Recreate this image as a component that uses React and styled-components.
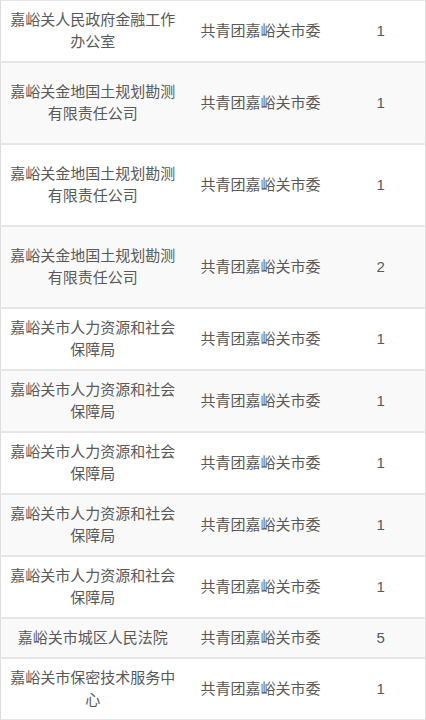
import React from 'react';
import styled, { createGlobalStyle } from 'styled-components';

const GlobalStyle = createGlobalStyle`
  body {
    margin: 0;
    background: #ffffff;
    font-family: "Liberation Sans", "Noto Sans CJK SC", sans-serif;
  }
`;

const Table = styled.table`
  width: 426px;
  border-collapse: collapse;
  table-layout: fixed;
  border-top: 1px solid #e6e6e6;
  border-left: 1px solid #dddddd;
  border-right: 1px solid #dddddd;
  color: #595959;
  font-size: 15px;
  line-height: 22px;
`;

const Row = styled.tr`
  background: ${({ striped }) => (striped ? '#f9f9f9' : '#ffffff')};
  border-bottom: 2px solid #e6e6e6;
  height: ${({ tall }) => (tall ? '82px' : 'auto')};
`;

const Cell = styled.td`
  padding: 8px 8px;
  text-align: center;
  vertical-align: middle;
  word-break: break-all;
`;

const rows = [
  { unit: '嘉峪关人民政府金融工作办公室', org: '共青团嘉峪关市委', num: 1 },
  { unit: '嘉峪关金地国土规划勘测有限责任公司', org: '共青团嘉峪关市委', num: 1, tall: true },
  { unit: '嘉峪关金地国土规划勘测有限责任公司', org: '共青团嘉峪关市委', num: 1, tall: true },
  { unit: '嘉峪关金地国土规划勘测有限责任公司', org: '共青团嘉峪关市委', num: 2, tall: true },
  { unit: '嘉峪关市人力资源和社会保障局', org: '共青团嘉峪关市委', num: 1 },
  { unit: '嘉峪关市人力资源和社会保障局', org: '共青团嘉峪关市委', num: 1 },
  { unit: '嘉峪关市人力资源和社会保障局', org: '共青团嘉峪关市委', num: 1 },
  { unit: '嘉峪关市人力资源和社会保障局', org: '共青团嘉峪关市委', num: 1 },
  { unit: '嘉峪关市人力资源和社会保障局', org: '共青团嘉峪关市委', num: 1 },
  { unit: '嘉峪关市城区人民法院', org: '共青团嘉峪关市委', num: 5 },
  { unit: '嘉峪关市保密技术服务中心', org: '共青团嘉峪关市委', num: 1 },
];

export default function App() {
  return (
    <>
      <GlobalStyle />
      <Table>
        <colgroup>
          <col style={{ width: '184px' }} />
          <col style={{ width: '152px' }} />
          <col />
        </colgroup>
        <tbody>
          {rows.map((r, i) => (
            <Row key={i} striped={i % 2 === 1} tall={r.tall}>
              <Cell>{r.unit}</Cell>
              <Cell>{r.org}</Cell>
              <Cell>{r.num}</Cell>
            </Row>
          ))}
        </tbody>
      </Table>
    </>
  );
}
